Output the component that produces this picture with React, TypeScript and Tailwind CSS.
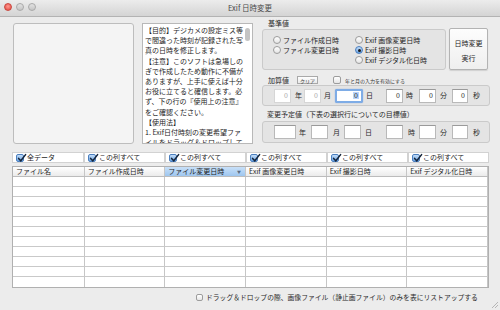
import clsx from "clsx";

type FieldSpec = { w: number; ml: string; label: string; lml: string; value?: string; tone?: "dim" | "dark" | "focus" };

const helpLines = [
  "【目的】デジカメの設定ミス等",
  "で間違った時刻が記録された写",
  "真の日時を修正します。",
  "【注意】このソフトは急場しの",
  "ぎで作成したため動作に不備が",
  "ありますが、上手に使えば十分",
  "お役に立てると確信します。必",
  "ず、下の行の『使用上の注意』",
  "をご確認ください。",
  "【使用法】",
  "1. Exif日付時刻の変更希望ファ",
  "イルをドラッグ＆ドロップして",
];

const addFields: FieldSpec[] = [
  { w: 17, ml: "ml-[11px]", label: "年", lml: "ml-[4px]", value: "0", tone: "dim" },
  { w: 17, ml: "ml-[2px]", label: "月", lml: "ml-[3px]", value: "0", tone: "dim" },
  { w: 28, ml: "ml-[4px]", label: "日", lml: "ml-[3px]", value: "0", tone: "focus" },
  { w: 17, ml: "ml-[13px]", label: "時", lml: "ml-[3px]", value: "0", tone: "dark" },
  { w: 17, ml: "ml-[6px]", label: "分", lml: "ml-[4px]", value: "0", tone: "dark" },
  { w: 16, ml: "ml-[5px]", label: "秒", lml: "ml-[5px]", value: "0", tone: "dark" },
];

const targetFields: FieldSpec[] = [
  { w: 22, ml: "ml-[11px]", label: "年", lml: "ml-[3px]" },
  { w: 17, ml: "ml-[5px]", label: "月", lml: "ml-[5px]" },
  { w: 17, ml: "ml-[4px]", label: "日", lml: "ml-[4px]" },
  { w: 17, ml: "ml-[14px]", label: "時", lml: "ml-[5px]" },
  { w: 17, ml: "ml-[4px]", label: "分", lml: "ml-[4px]" },
  { w: 16, ml: "ml-[5px]", label: "秒", lml: "ml-[5px]" },
];

const columns = [
  { title: "ファイル名", check: "全データ", w: "w-[72px]" },
  { title: "ファイル作成日時", check: "この列すべて", w: "w-[81px]" },
  { title: "ファイル変更日時", check: "この列すべて", w: "w-[81px]", selected: true },
  { title: "Exif 画像変更日時", check: "この列すべて", w: "w-[81px]" },
  { title: "Exif 撮影日時", check: "この列すべて", w: "w-[81px]" },
  { title: "Exif デジタル化日時", check: "この列すべて", w: "w-[81px]" },
];

function Radio({ label, checked }: { label: string; checked?: boolean }) {
  return (
    <div className="flex h-[10px] items-center gap-[2px]">
      <span
        className={clsx(
          "flex h-[8px] w-[8px] items-center justify-center rounded-full border",
          checked
            ? "border-[#4b7fbf] bg-linear-to-b from-[#c3ddf8] to-[#6aa3e3]"
            : "border-[#9c9c9c] bg-linear-to-b from-white to-[#e4e4e4]"
        )}
      >
        {checked && <span className="h-[3px] w-[3px] rounded-full bg-[#1b1b1b]" />}
      </span>
      <span className="whitespace-nowrap text-[7px] leading-none text-[#1e1e1e]">{label}</span>
    </div>
  );
}

function Check({ checked, size = 8 }: { checked?: boolean; size?: number }) {
  const box = size === 8 ? "h-[8px] w-[8px]" : "h-[7px] w-[7px]";
  if (!checked) {
    return <span className={clsx(box, "block shrink-0 rounded-[2px] border border-[#9c9c9c] bg-linear-to-b from-white to-[#e6e6e6]")} />;
  }
  return (
    <span className={clsx(box, "relative block shrink-0 rounded-[2px] border border-[#4b7fbf] bg-linear-to-b from-[#c3ddf8] to-[#6aa3e3]")}>
      <svg viewBox="0 0 10 10" className="absolute -top-[2px] left-0 h-[10px] w-[10px]">
        <path d="M1.6 5.4 L3.8 7.8 L8.6 1.6" stroke="#14243a" strokeWidth="1.5" fill="none" strokeLinecap="round" />
      </svg>
    </span>
  );
}

function Field({ f }: { f: FieldSpec }) {
  return (
    <>
      <div
        className={clsx(
          f.ml,
          "flex h-[14px] items-center justify-end bg-white pr-[2px] text-[7px] leading-none",
          f.tone === "focus"
            ? "rounded-[2px] border-2 border-[#7eace6] shadow-[0_0_1px_#5b8fd6]"
            : f.tone === "dim"
              ? "border border-[#d6d6d6]"
              : "border border-[#b9b9b9] border-t-[#9a9a9a]",
          f.tone === "dim" ? "text-[#a8a8a8]" : "text-[#1e1e1e]"
        )}
        style={{ width: f.w }}
      >
        {f.tone === "focus" ? <span className="bg-[#b7d4fb] px-px">{f.value}</span> : f.value}
      </div>
      <span className={clsx(f.lml, "text-[7px] leading-none text-[#2a2a2a]")}>{f.label}</span>
    </>
  );
}

export default function App() {
  return (
    <div className="relative h-[310px] w-[500px] overflow-hidden bg-[#ececec] font-['Noto_Sans_CJK_JP',sans-serif]">
      {/* title bar */}
      <div className="relative flex h-[17px] items-center justify-center border-b border-[#b3b3b3] bg-linear-to-b from-[#ececec] to-[#d4d4d4]">
        <div className="absolute left-[4px] top-[3px] flex gap-[4px]">
          <span className="h-[8px] w-[8px] rounded-full border border-[#c9473f] bg-[radial-gradient(circle_at_50%_40%,#ff9a92,#e2433a)]" />
          <span className="h-[8px] w-[8px] rounded-full border border-[#a9a9a9] bg-linear-to-b from-[#e2e2e2] to-[#c6c6c6]" />
          <span className="h-[8px] w-[8px] rounded-full border border-[#a9a9a9] bg-linear-to-b from-[#e2e2e2] to-[#c6c6c6]" />
        </div>
        <span className="text-[7.5px] leading-none text-[#4a4a4a]">Exif 日時変更</span>
      </div>

      {/* top section */}
      <div className="flex pl-[13px] pt-px">
        <div className="mt-[5px] h-[121px] w-[121px] rounded-[3px] border border-[#bdbdbd] bg-[#f4f4f4]" />

        <div className="relative ml-[8px] mt-[5px] h-[121px] w-[111px] overflow-hidden border border-[#b8b8b8] bg-white pl-[2px] pt-px">
          {helpLines.map((l) => (
            <div key={l} className="whitespace-nowrap text-[7px] leading-[10.2px] text-[#1e1e1e]">
              {l}
            </div>
          ))}
          <div className="absolute right-[2px] top-[4px] h-[13px] w-[5px] rounded-full bg-[#c4c4c4]" />
        </div>

        <div className="ml-[9px] w-[228px]">
          <div className="flex h-[10px] items-center pl-[6px] text-[7px] leading-none text-[#2a2a2a]">基準値</div>
          <div className="flex">
            <div className="mt-px flex h-[41px] w-[184px] rounded-[3px] border border-[#cacaca] bg-[#e4e4e4] pl-[10px] pt-[5px]">
              <div className="w-[82px]">
                <Radio label="ファイル作成日時" />
                <Radio label="ファイル変更日時" />
              </div>
              <div>
                <Radio label="Exif 画像変更日時" />
                <Radio label="Exif 撮影日時" checked />
                <Radio label="Exif デジタル化日時" />
              </div>
            </div>
            <div className="ml-[3px] flex h-[42px] w-[39px] flex-col items-center gap-[8px] rounded-[2px] border border-[#b3b3b3] bg-linear-to-b from-[#fdfdfd] to-[#efefef] pt-[11px] text-[7px] leading-none text-[#1e1e1e] shadow-[0_1px_1px_rgba(0,0,0,0.12)]">
              <span>日時変更</span>
              <span>実行</span>
            </div>
          </div>

          <div className="mt-[5px] flex h-[10px] items-center pl-[6px]">
            <span className="text-[7px] leading-none text-[#2a2a2a]">加算値</span>
            <span className="ml-[8px] flex h-[8px] w-[21px] items-center justify-center border border-[#a9a9a9] bg-linear-to-b from-white to-[#e9e9e9] text-[5px] leading-none text-[#333]">
              クリア
            </span>
            <span className="ml-[15px] block">
              <Check />
            </span>
            <span className="ml-[4px] text-[5px] leading-none text-[#333]">年と月の入力を有効にする</span>
          </div>
          <div className="flex h-[21px] items-center rounded-[3px] border border-[#cacaca] bg-[#e4e4e4]">
            {addFields.map((f) => (
              <Field key={f.label} f={f} />
            ))}
          </div>

          <div className="flex h-[15px] items-center pl-[5px] pt-[2px] text-[7px] leading-none text-[#2a2a2a]">
            変更予定値（下表の選択行についての目標値）
          </div>
          <div className="flex h-[22px] items-center rounded-[3px] border border-[#cacaca] bg-[#e4e4e4]">
            {targetFields.map((f) => (
              <Field key={f.label} f={f} />
            ))}
          </div>
        </div>
      </div>

      {/* table */}
      <div className="ml-[12px] mt-[8px] w-[477px]">
        <div className="flex h-[11px]">
          {columns.map((c) => (
            <div key={c.title} className={clsx(c.w, "flex items-center gap-[3px] border border-[#d2d2d2] bg-white pl-[3px]")}>
              <Check checked />
              <span className="whitespace-nowrap text-[7px] leading-none text-[#1e1e1e]">{c.check}</span>
            </div>
          ))}
        </div>

        <div className="mt-[3px] border border-[#b0b0b0] bg-white">
          <div className="flex h-[10px] border-b border-[#bcbcbc]">
            {columns.map((c) => (
              <div
                key={c.title}
                className={clsx(
                  c.w,
                  "relative flex items-center border-r border-[#c6c6c6] pl-[3px] text-[7px] leading-none text-[#1e1e1e]",
                  c.selected ? "bg-linear-to-b from-[#c8e0f8] to-[#9ec6ef]" : "bg-linear-to-b from-white to-[#ebebeb]"
                )}
              >
                <span className="whitespace-nowrap">{c.title}</span>
                {c.selected && <span className="absolute right-[4px] top-[3px] text-[4px] leading-none text-[#5a6a80]">▼</span>}
              </div>
            ))}
          </div>
          {Array.from({ length: 11 }).map((_, r) => (
            <div key={r} className="flex h-[10px] border-b border-[#c9c9c9] last:border-b-0">
              {columns.map((c) => (
                <div key={c.title} className={clsx(c.w, "border-r border-[#c6c6c6]")} />
              ))}
            </div>
          ))}
        </div>
      </div>

      {/* bottom option */}
      <div className="mt-[5px] flex h-[8px] items-center pl-[196px]">
        <Check size={7} />
        <span className="ml-[3px] whitespace-nowrap text-[6.8px] leading-none text-[#2a2a2a]">
          ドラッグ＆ドロップの際、画像ファイル（静止画ファイル）のみを表にリストアップする
        </span>
      </div>

      {/* resize grip */}
      <svg viewBox="0 0 10 10" className="absolute bottom-[1px] right-[1px] h-[10px] w-[10px]">
        <path d="M9 3 L3 9 M9 6 L6 9" stroke="#a8a8a8" strokeWidth="0.8" />
      </svg>
    </div>
  );
}
